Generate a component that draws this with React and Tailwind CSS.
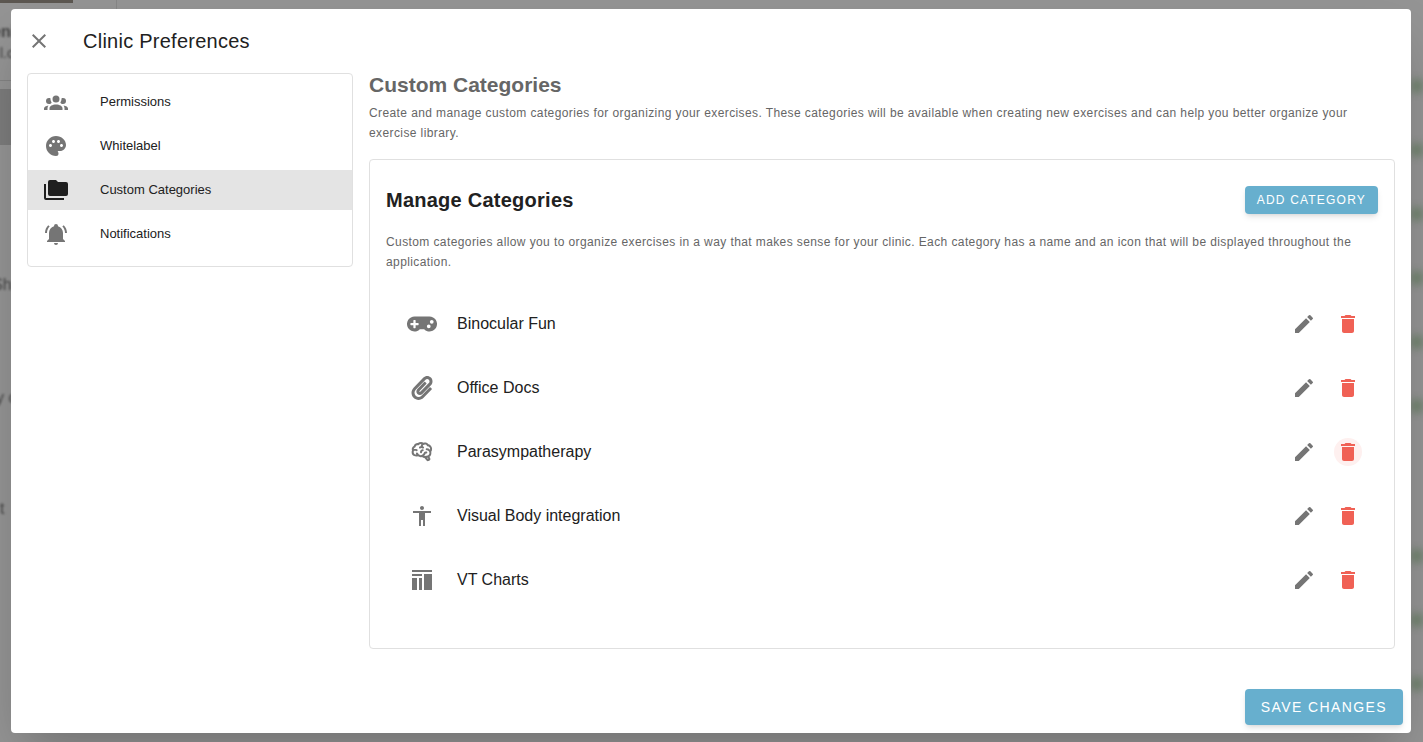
import React, { useState } from "react";
import { FaGamepad, FaPaperclip } from "react-icons/fa";
import { MdAccessibility, MdClose, MdDelete, MdEdit, MdPalette } from "react-icons/md";

const ICON_PATHS = {
  group:
    "M12,5.5A3.5,3.5 0 0,1 15.5,9A3.5,3.5 0 0,1 12,12.5A3.5,3.5 0 0,1 8.5,9A3.5,3.5 0 0,1 12,5.5M5,8C5.56,8 6.08,8.15 6.53,8.42C6.38,9.85 6.8,11.27 7.66,12.38C7.16,13.34 6.16,14 5,14A3,3 0 0,1 2,11A3,3 0 0,1 5,8M19,8A3,3 0 0,1 22,11A3,3 0 0,1 19,14C17.84,14 16.84,13.34 16.34,12.38C17.2,11.27 17.62,9.85 17.47,8.42C17.92,8.15 18.44,8 19,8M5.5,18.25C5.5,16.18 8.41,14.5 12,14.5C15.59,14.5 18.5,16.18 18.5,18.25V20H5.5V18.25M0,20V18.5C0,17.11 1.89,15.94 4.45,15.6C3.86,16.28 3.5,17.22 3.5,18.25V20H0M24,20H20.5V18.25C20.5,17.22 20.14,16.28 19.55,15.6C22.11,15.94 24,17.11 24,18.5V20Z",
  folders:
    "M22,4H14L12,2H6A2,2 0 0,0 4,4V16A2,2 0 0,0 6,18H22A2,2 0 0,0 24,16V6A2,2 0 0,0 22,4M2,6H0V11H0V20A2,2 0 0,0 2,22H20V20H2V6Z",
  bell:
    "M21,19V20H3V19L5,17V11C5,7.9 7.03,5.17 10,4.29C10,4.19 10,4.1 10,4A2,2 0 0,1 12,2A2,2 0 0,1 14,4C14,4.1 14,4.19 14,4.29C16.97,5.17 19,7.9 19,11V17L21,19M14,21A2,2 0 0,1 12,23A2,2 0 0,1 10,21M19.75,3.19L18.33,4.61C20.04,6.3 21,8.6 21,11H23C23,8.07 21.84,5.25 19.75,3.19M1,11H3C3,8.6 3.96,6.3 5.67,4.61L4.25,3.19C2.16,5.25 1,8.07 1,11Z",
  brain:
    "M21.33,12.91C21.42,14.46 20.71,15.95 19.44,16.86L20.21,18.35C20.44,18.8 20.47,19.33 20.27,19.8C20.08,20.27 19.69,20.64 19.21,20.8L18.42,21.05C18.25,21.11 18.06,21.14 17.88,21.14C17.37,21.14 16.89,20.91 16.56,20.5L14.44,18C13.55,17.85 12.71,17.47 12,16.9C11.5,17.05 11,17.13 10.5,17.13C9.62,17.13 8.74,16.86 8,16.34C7.47,16.5 6.93,16.57 6.38,16.56C5.59,16.57 4.81,16.41 4.08,16.11C2.65,15.47 1.7,14.07 1.65,12.5C1.57,11.78 1.69,11.05 2,10.39C1.71,9.64 1.68,8.82 1.93,8.06C2.3,7.11 3,6.32 3.87,5.82C4.45,4.13 6.08,3 7.87,3.12C9.47,1.62 11.92,1.46 13.7,2.75C14.12,2.64 14.56,2.58 15,2.58C16.36,2.55 17.65,3.15 18.5,4.22C20.54,4.75 22,6.57 22.08,8.69C22.13,9.8 21.83,10.89 21.22,11.82C21.29,12.18 21.33,12.54 21.33,12.91M16.33,11.5C16.9,11.57 17.35,12 17.35,12.57A1,1 0 0,1 16.35,13.57H15.72C15.4,14.47 14.84,15.26 14.1,15.86C14.35,15.95 14.61,16 14.87,16.07C20,16 19.4,12.87 19.4,12.82C19.34,11.39 18.14,10.27 16.71,10.33A1,1 0 0,1 15.71,9.33A1,1 0 0,1 16.71,8.33C17.94,8.36 19.12,8.82 20.04,9.63C20.09,9.34 20.12,9.04 20.12,8.74C20.06,7.5 19.5,6.42 17.25,6.21C16,3.25 12.85,4.89 12.85,5.81V5.81C12.82,6.04 13.06,6.53 13.1,6.56A1,1 0 0,1 14.1,7.56C14.1,8.11 13.65,8.56 13.1,8.56V8.56C12.57,8.54 12.07,8.34 11.67,8C11.19,8.31 10.64,8.5 10.07,8.56V8.56C9.5,8.61 9.03,8.21 9,7.66C8.92,7.1 9.33,6.61 9.88,6.56C10.04,6.54 10.82,6.42 10.82,5.79V5.79C10.82,5.13 11.07,4.5 11.5,4C10.58,3.75 9.59,4.08 8.59,5.29C6.75,5 6,5.25 5.45,7.2C4.5,7.67 4,8 3.78,9C4.86,8.78 5.97,8.87 7,9.25C7.5,9.44 7.78,10 7.59,10.54C7.4,11.06 6.82,11.32 6.3,11.13C5.57,10.81 4.75,10.79 4,11.07C3.68,11.34 3.68,11.9 3.68,12.34C3.68,13.08 4.05,13.77 4.68,14.17C5.21,14.44 5.8,14.58 6.39,14.57C6.24,14.31 6.11,14.04 6,13.76C5.81,13.22 6.1,12.63 6.64,12.44C7.18,12.25 7.77,12.54 7.96,13.08C8.36,14.22 9.38,15 10.58,15.13C11.95,15.06 13.17,14.25 13.77,13C14,11.62 15.11,11.5 16.33,11.5M18.33,18.97L17.71,17.67L17,17.83L18,19.08L18.33,18.97M13.68,10.36C13.7,9.83 13.3,9.38 12.77,9.33C12.06,9.29 11.37,9.53 10.84,10C10.27,10.58 9.97,11.38 10,12.19A1,1 0 0,0 11,13.19C11.57,13.19 12,12.74 12,12.19C12,11.92 12.07,11.65 12.23,11.43C12.35,11.33 12.5,11.28 12.66,11.28C13.21,11.31 13.68,10.9 13.68,10.36Z",
  columns:
    "M2,2H22V4H2V2M2,6H12V8H2V6M2,10H7V22H2V10M9,10H12V22H9V10M14,6H22V22H14V6Z",
};

const PathIcon = ({ name, size = 24 }) => (
  <svg viewBox="0 0 24 24" width={size} height={size} fill="currentColor" aria-hidden="true">
    <path d={ICON_PATHS[name]} />
  </svg>
);

const NAV_ITEMS = [
  { label: "Permissions", icon: <PathIcon name="group" /> },
  { label: "Whitelabel", icon: <MdPalette size={24} /> },
  { label: "Custom Categories", icon: <PathIcon name="folders" /> },
  { label: "Notifications", icon: <PathIcon name="bell" /> },
];

const CATEGORIES = [
  { name: "Binocular Fun", icon: <FaGamepad size={24} className="w-[30px]" /> },
  { name: "Office Docs", icon: <FaPaperclip size={24} /> },
  { name: "Parasympatherapy", icon: <PathIcon name="brain" /> },
  { name: "Visual Body integration", icon: <MdAccessibility size={24} /> },
  { name: "VT Charts", icon: <PathIcon name="columns" /> },
];

// the page that sits under the overlay
const Backdrop = () => (
  <div aria-hidden="true" className="absolute inset-0 overflow-hidden bg-[#949494] text-[#444]">
    <div className="absolute left-0 top-0 h-[3px] w-[73px] bg-[#5c5751]" />
    <div className="absolute left-[116px] top-0 h-4 w-px bg-[#868686]" />
    <div className="absolute left-0 top-20 h-px w-4 bg-[#838383]" />
    <div className="absolute left-0 top-[89px] h-14 w-4 bg-[#7c7c7c]" />
    <div className="absolute -left-2 top-5 text-base font-bold blur-[1px]">eni</div>
    <div className="absolute left-0 top-[43px] text-sm blur-[1px]">l.c</div>
    <div className="absolute -left-2 top-[273px] text-base blur-[1px]">Sh</div>
    <div className="absolute -left-1 top-[386px] text-base blur-[1px]">y c</div>
    <div className="absolute left-0 top-[497px] text-base blur-[1px]">t</div>
    <div className="absolute right-0 top-20 flex flex-col gap-[138px] blur-[4px]">
      {[6, 3].map((count) => (
        <div key={count} className="flex flex-col gap-[52px]">
          {Array.from({ length: count }, (_, i) => (
            <div key={i} className="h-3 w-3 bg-[#6b8068]" />
          ))}
        </div>
      ))}
    </div>
  </div>
);

const CategoryRow = ({ name, icon, active, onSelect }) => (
  <li className="flex h-16 items-center px-4">
    <span className="flex w-[39px] justify-center text-[#757575]">{icon}</span>
    <span className="ml-4 flex-1 text-base text-[#212121]">{name}</span>
    <button
      aria-label={`Edit ${name}`}
      className="mr-4 flex h-7 w-7 items-center justify-center rounded-full text-[#757575] hover:bg-gray-100"
    >
      <MdEdit size={24} />
    </button>
    <button
      aria-label={`Delete ${name}`}
      onClick={onSelect}
      className={`flex h-7 w-7 items-center justify-center rounded-full text-[#f06155] ${
        active ? "bg-[#fef0ef]" : "hover:bg-red-50"
      }`}
    >
      <MdDelete size={24} />
    </button>
  </li>
);

function App() {
  const [section, setSection] = useState("Custom Categories");
  const [activeRow, setActiveRow] = useState("Parasympatherapy");

  return (
    <div className="relative flex min-h-screen py-[9px] pr-3 pl-[11px] font-['Liberation_Sans',Arial,sans-serif]">
      <Backdrop />

      <div
        role="dialog"
        aria-labelledby="dialog-title"
        className="relative flex flex-1 flex-col rounded bg-white shadow-2xl"
      >
        {/* HEADER */}
        <header className="flex h-16 items-center gap-8 px-4">
          <button aria-label="Close" className="text-[#757575]">
            <MdClose size={24} />
          </button>
          <h1 id="dialog-title" className="text-xl tracking-[0.0125em] text-[#212121]">
            Clinic Preferences
          </h1>
        </header>

        <div className="flex flex-1 items-start gap-4 px-4">

          {/* SIDE NAV */}
          <nav className="w-[326px] shrink-0 rounded border border-[#e0e0e0] pt-2 pb-3">
            <ul className="flex flex-col gap-1">
              {NAV_ITEMS.map((item) => {
                const current = item.label === section;
                return (
                  <li key={item.label}>
                    <button
                      onClick={() => setSection(item.label)}
                      aria-current={current ? "page" : undefined}
                      className={`flex h-10 w-full items-center gap-8 px-4 text-left ${
                        current ? "bg-[#e4e4e4]" : "hover:bg-gray-50"
                      }`}
                    >
                      <span className={current ? "text-[#1f1f1f]" : "text-[#757575]"}>{item.icon}</span>
                      <span className="text-[13px] text-[#212121]">{item.label}</span>
                    </button>
                  </li>
                );
              })}
            </ul>
          </nav>

          {/* CONTENT */}
          <main className="min-w-0 flex-1">
            <h2 className="text-[21px] leading-6 font-bold text-[#666]">Custom Categories</h2>
            <p className="mt-1.5 text-xs leading-5 tracking-[0.0333em] text-[#666]">
              Create and manage custom categories for organizing your exercises. These categories will be
              available when creating new exercises and can help you better organize your exercise library.
            </p>

            <section className="mt-4 rounded border border-[#e0e0e0] px-4 pt-[26px] pb-9">
              <div className="flex items-center justify-between">
                <h3 className="text-xl font-bold tracking-[0.0125em] text-[#212121]">Manage Categories</h3>
                <button className="h-7 rounded bg-[#67afce] px-3 text-xs tracking-widest text-white uppercase shadow-md">
                  Add Category
                </button>
              </div>
              <p className="mt-[18px] text-xs leading-5 tracking-[0.0333em] text-[#666]">
                Custom categories allow you to organize exercises in a way that makes sense for your clinic. Each
                category has a name and an icon that will be displayed throughout the application.
              </p>

              <ul className="mt-5">
                {CATEGORIES.map((c) => (
                  <CategoryRow
                    key={c.name}
                    name={c.name}
                    icon={c.icon}
                    active={c.name === activeRow}
                    onSelect={() => setActiveRow(c.name)}
                  />
                ))}
              </ul>
            </section>
          </main>
        </div>

        {/* FOOTER */}
        <footer className="flex justify-end p-2">
          <button className="h-9 rounded bg-[#67afce] px-4 text-sm tracking-widest text-white uppercase shadow-md">
            Save Changes
          </button>
        </footer>
      </div>
    </div>
  );
}

export default App;
